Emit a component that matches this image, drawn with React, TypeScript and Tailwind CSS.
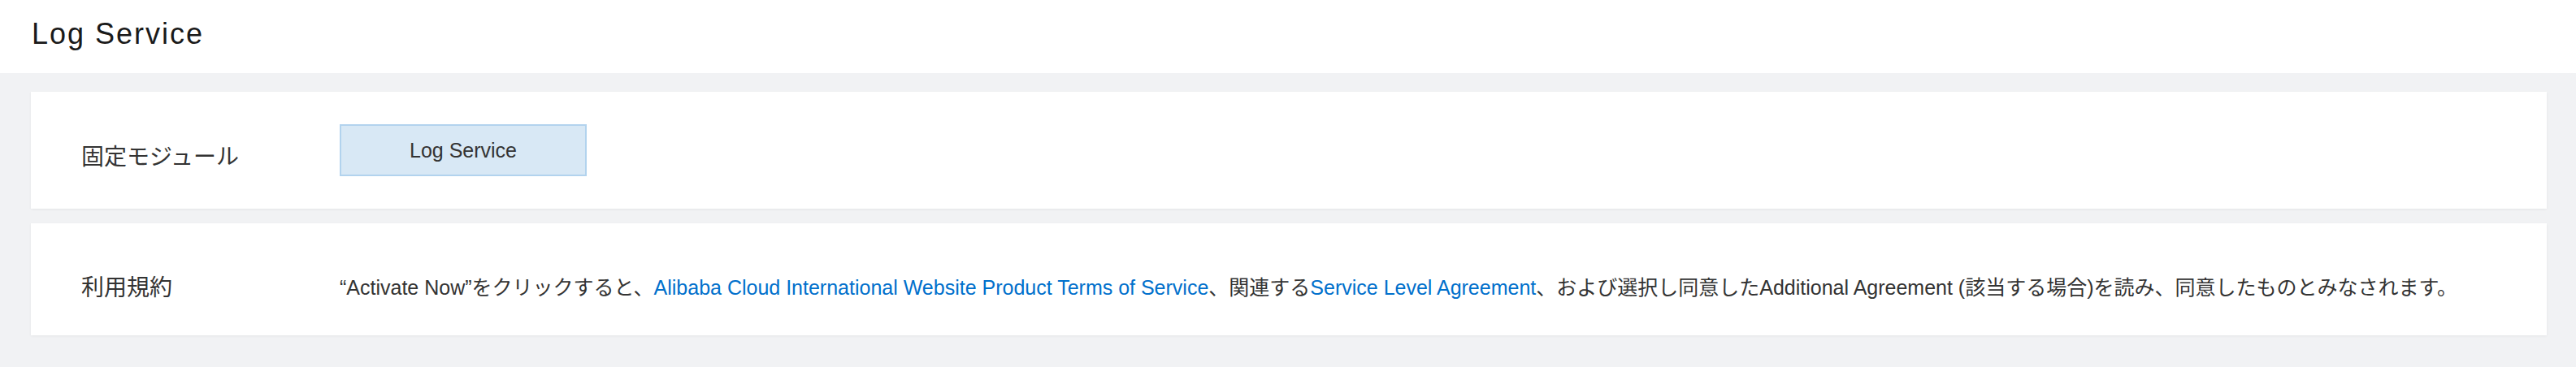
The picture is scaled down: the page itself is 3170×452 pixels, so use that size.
import { ReactNode } from 'react';

const font = "font-['Liberation_Sans','Noto_Sans_CJK_JP',sans-serif]";

const Card = ({ className, children }: { className: string; children: ReactNode }) => (
  <div className={`bg-white shadow-[0_1px_3px_rgba(0,0,0,0.06)] pl-[62px] ${className}`}>{children}</div>
);

const App = () => {
  return (
    <div className={`${font} min-h-[452px] bg-[#f1f2f4]`}>
      {/* Page header */}
      <div className="h-[90px] bg-white pl-[39px] text-[36px] leading-[84px] tracking-[2px] text-[#1a1a1a]">
        Log Service
      </div>

      <div className="pl-[38px] pr-[36px] pt-[23px] flex flex-col gap-[18px]">
        {/* Fixed module */}
        <Card className="pt-[40px] pb-[40px]">
          <div className="flex items-start">
            <div className="w-[318px] mt-[21px] text-[28px] leading-[40px] text-[#333]">固定モジュール</div>
            <div className="w-[304px] h-[64px] border-2 border-[#b2d3ee] bg-[#d8e8f5] flex items-center justify-center pt-[2px] text-[25px] text-[#333]">
              Log Service
            </div>
          </div>
        </Card>

        {/* Terms */}
        <Card className="pt-[58px] pb-[40px]">
          <div className="flex items-center h-[40px]">
            <div className="w-[318px] shrink-0 pt-[3px] text-[28px] leading-[40px] text-[#333]">利用規約</div>
            <div className="pt-[2px] text-[25px] leading-[36px] text-[#333] whitespace-nowrap">
              “Activate Now”をクリックすると、
              <span className="text-[#0070cc]">Alibaba Cloud International Website Product Terms of Service</span>
              、関連する
              <span className="text-[#0070cc]">Service Level Agreement</span>
              、および選択し同意したAdditional Agreement (該当する場合)を読み、同意したものとみなされます。
            </div>
          </div>
        </Card>
      </div>
    </div>
  );
};

export default App;
